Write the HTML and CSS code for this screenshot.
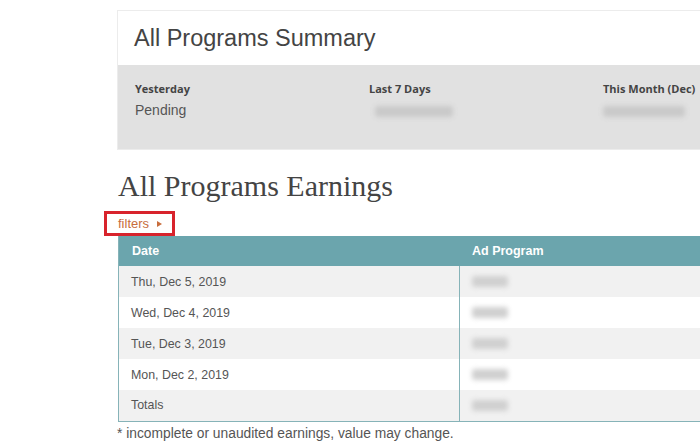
FILE: index.html
```html
<!DOCTYPE html>
<html>
<head>
<meta charset="utf-8">
<link rel="stylesheet" href="styles.css">
</head>
<body>
<div class="page">
  <section class="summary">
    <h2 class="summary-title">All Programs Summary</h2>
    <div class="summary-stats">
      <div class="stat">
        <div class="stat-label">Yesterday</div>
        <div class="stat-value">Pending</div>
      </div>
      <div class="stat">
        <div class="stat-label">Last 7 Days</div>
        <div class="blur blur-wide"></div>
      </div>
      <div class="stat">
        <div class="stat-label">This Month (Dec)</div>
        <div class="blur blur-wide2"></div>
      </div>
    </div>
  </section>

  <h1 class="earnings-title">All Programs Earnings</h1>
  <div class="filters-row">
    <span class="filters">filters <span class="caret"></span></span>
  </div>

  <table class="earnings">
    <thead>
      <tr><th class="col-date">Date</th><th class="col-prog">Ad Program</th></tr>
    </thead>
    <tbody>
      <tr class="odd"><td>Thu, Dec 5, 2019</td><td class="val"><div class="blur blur-sm"></div></td></tr>
      <tr><td>Wed, Dec 4, 2019</td><td class="val"><div class="blur blur-sm"></div></td></tr>
      <tr class="odd"><td>Tue, Dec 3, 2019</td><td class="val"><div class="blur blur-sm"></div></td></tr>
      <tr><td>Mon, Dec 2, 2019</td><td class="val"><div class="blur blur-sm"></div></td></tr>
      <tr class="odd"><td>Totals</td><td class="val"><div class="blur blur-sm"></div></td></tr>
    </tbody>
  </table>
  <p class="note">* incomplete or unaudited earnings, value may change.</p>
</div>
</body>
</html>
```
FILE: styles.css
```css
html, body {
  margin: 0;
  padding: 0;
  background: #fff;
  overflow: hidden;
}
.page {
  width: 700px;
  height: 447px;
  overflow: hidden;
  padding-left: 118px;
  padding-top: 10px;
  box-sizing: border-box;
  font-family: "Liberation Sans", Arial, sans-serif;
  color: #555;
}
.summary {
  width: 620px;
  border: 1px solid #ececec;
  border-right: none;
  box-sizing: border-box;
  margin-left: -1px;
}
.summary-title {
  margin: 0;
  height: 54px;
  display: flex;
  align-items: center;
  padding-left: 16px;
  font-weight: normal;
  font-size: 23.5px;
  color: #444;
}
.summary-stats {
  display: flex;
  background: #e1e1e1;
  height: 84px;
  padding: 17px 0 0 17px;
  box-sizing: border-box;
}
.stat {
  width: 234px;
  flex: none;
}
.stat-label {
  font-family: "Open Sans", sans-serif;
  font-weight: bold;
  font-size: 11px;
  color: #444;
  line-height: 14px;
}
.stat-value {
  font-size: 14px;
  color: #555;
  margin-top: 6px;
  line-height: 16px;
}
.blur {
  background: #c9c9c9;
  filter: blur(2.5px);
  border-radius: 3px;
}
.blur-wide {
  width: 78px;
  height: 11px;
  margin-top: 10px;
  margin-left: 6px;
}
.blur-wide2 {
  width: 82px;
  height: 11px;
  margin-top: 10px;
}
.earnings-title {
  margin: 19px 0 0 0;
  font-family: "Liberation Serif", "Times New Roman", serif;
  font-weight: normal;
  font-size: 30px;
  line-height: 34px;
  color: #444;
}
.filters-row {
  height: 26px;
  margin-left: -14px;
  margin-top: 8px;
}
.filters {
  display: inline-flex;
  align-items: center;
  box-sizing: border-box;
  width: 71px;
  height: 25px;
  border: 3px solid #d8232c;
  padding-left: 11px;
  font-size: 13px;
  color: #c86d3d;
}
.caret {
  display: inline-block;
  width: 0;
  height: 0;
  border-top: 3.5px solid transparent;
  border-bottom: 3.5px solid transparent;
  border-left: 5px solid #c86d3d;
  margin-left: 8px;
}
.earnings {
  border-collapse: collapse;
  width: 640px;
  margin-top: -1px;
  border-left: 1px solid #86b3b8;
  border-bottom: 1px solid #86b3b8;
  font-size: 12.4px;
}
.earnings th {
  background: #6ba5ad;
  color: #fff;
  font-weight: bold;
  text-align: left;
  height: 30px;
  padding: 0 0 0 13px;
  font-size: 12.5px;
}
.earnings td {
  height: 31px;
  padding: 0 0 0 12px;
  color: #555;
  box-sizing: border-box;
}
.col-date {
  width: 327px;
}
.earnings tr.odd td {
  background: #f1f1f1;
}
.earnings td.val {
  border-left: 1px solid #86b3b8;
}
.blur-sm {
  width: 36px;
  height: 11px;
  margin-left: 0;
  background: #d0d0d0;
}
.note {
  margin: 4px 0 0 -1px;
  font-size: 13.8px;
  color: #555;
}
```
